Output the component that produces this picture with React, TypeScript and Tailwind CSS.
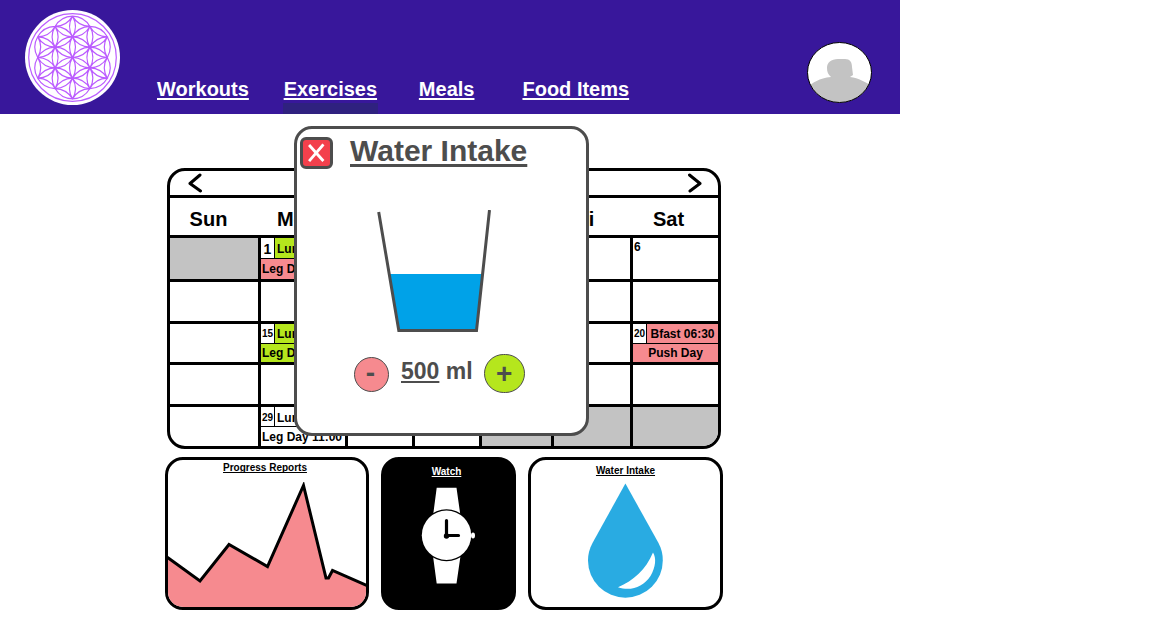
import React from "react";

const R = 20.7;

function latticePoint(a: number, b: number) {
  return { x: a * R * 0.84, y: (b + a / 2) * R };
}

function isInside(a: number, b: number) {
  return Math.max(Math.abs(a), Math.abs(b), Math.abs(a + b)) <= 2;
}

function petals() {
  const paths: string[] = [];
  const steps = [
    [1, 0],
    [0, 1],
    [1, -1],
  ];
  for (let a = -2; a <= 2; a++) {
    for (let b = -2; b <= 2; b++) {
      for (const [da, db] of steps) {
        if (!isInside(a, b) || !isInside(a + da, b + db)) continue;
        const p = latticePoint(a, b);
        const q = latticePoint(a + da, b + db);
        const from = `${p.x.toFixed(2)} ${p.y.toFixed(2)}`;
        const to = `${q.x.toFixed(2)} ${q.y.toFixed(2)}`;
        paths.push(`M${from}A${R} ${R} 0 0 0 ${to}A${R} ${R} 0 0 0 ${from}`);
      }
    }
  }
  return paths.join("");
}

function Logo() {
  return (
    <svg viewBox="-47.5 -47.5 95 95" className="h-[95px] w-[95px]" role="img" aria-label="Home">
      <circle r="47.5" fill="#fff" />
      <g fill="none" stroke="#bb5cff">
        <circle r="43.8" strokeWidth="1.2" />
        <path d={petals()} strokeWidth="1.2" />
      </g>
    </svg>
  );
}

function Avatar() {
  return (
    <svg viewBox="0 0 65 61" className="h-[61px] w-[65px]" aria-hidden="true">
      <defs>
        <clipPath id="avatar-clip">
          <ellipse cx="32.5" cy="30.5" rx="32" ry="30" />
        </clipPath>
      </defs>
      <ellipse cx="32.5" cy="30.5" rx="32" ry="30" fill="#fff" />
      <g clipPath="url(#avatar-clip)" fill="#c3c3c3">
        <path d="M20 26C20 20 24 17.5 31 17H38C43 17 45 20 45 25L46 33L43 35C52 36 58 40 65 44V61H0V45C6 41 12 36 24 35C21 32 20 30 20 26Z" />
      </g>
      <ellipse cx="32.5" cy="30.5" rx="32" ry="30" fill="none" stroke="#000" />
    </svg>
  );
}

const links = [
  { label: "Workouts", gap: "mr-[34px]" },
  { label: "Exercises", gap: "mr-[41px]", active: true },
  { label: "Meals", gap: "mr-12" },
  { label: "Food Items", gap: "" },
];

function Header() {
  return (
    <header className="flex h-[114px] justify-between bg-[#38179b] pr-7 pl-[25px]">
      <div className="flex">
        <a href="#home" className="mt-2.5 mr-[37px]">
          <Logo />
        </a>
        <nav className="flex items-end">
          {links.map((l) => (
            <a
              key={l.label}
              href="#"
              className={`flex flex-col items-center gap-0.5 text-xl leading-6 font-bold text-white underline decoration-2 underline-offset-2 ${l.gap}`}
            >
              {l.label}
              <span className={l.active ? "h-[11px] w-[95px] bg-[#2f217f]" : "h-[11px]"} />
            </a>
          ))}
        </nav>
      </div>
      <button type="button" aria-label="Profile" className="mt-[42px] self-start">
        <Avatar />
      </button>
    </header>
  );
}

function Arrow({ d }: { d: string }) {
  return (
    <svg viewBox="0 0 16 20" className="h-5 w-4" fill="none" stroke="#000" strokeWidth="3" strokeLinecap="round" strokeLinejoin="round">
      <path d={d} />
    </svg>
  );
}

type Cell = {
  date?: string;
  dateSize?: string;
  meal?: string;
  mealColor?: string;
  workout?: string;
  workoutColor?: string;
  center?: boolean;
  off?: boolean;
};

const off: Cell = { off: true };
const none: Cell = {};

const weeks: { height: string; inner: string; cells: Cell[] }[] = [
  {
    height: "h-[44px]",
    inner: "h-[41px]",
    cells: [
      off,
      { date: "1", dateSize: "text-[14px]", meal: "Lunch", mealColor: "bg-[#b5e61d]", workout: "Leg Day 11:00", workoutColor: "bg-[#f68a8f]" },
      none,
      none,
      none,
      none,
      { date: "6" },
    ],
  },
  { height: "h-[42px]", inner: "h-[39px]", cells: [none, none, none, none, none, none, none] },
  {
    height: "h-[41px]",
    inner: "h-[38px]",
    cells: [
      none,
      { date: "15", dateSize: "text-[10px]", meal: "Lunch", mealColor: "bg-[#b5e61d]", workout: "Leg Day 11:00", workoutColor: "bg-[#b5e61d]" },
      none,
      none,
      none,
      none,
      { date: "20", dateSize: "text-[10px]", meal: "Bfast 06:30", mealColor: "bg-[#f68a8f]", workout: "Push Day", workoutColor: "bg-[#f68a8f]", center: true },
    ],
  },
  { height: "h-[42px]", inner: "h-[39px]", cells: [none, none, none, none, none, none, none] },
  {
    height: "h-[39px]",
    inner: "h-[39px]",
    cells: [
      none,
      { date: "29", dateSize: "text-[10px]", meal: "Lunch", mealColor: "bg-white", workout: "Leg Day 11:00", workoutColor: "bg-white" },
      none,
      none,
      off,
      off,
      off,
    ],
  },
];

function CellBody({ cell, inner }: { cell: Cell; inner: string }) {
  if (!cell.meal) {
    return <div className={`pt-px pl-px text-xs leading-4 font-bold ${inner}`}>{cell.date}</div>;
  }
  const align = cell.center ? "justify-center" : "pl-0.5";
  return (
    <div className={`flex flex-col text-xs leading-3 font-bold whitespace-nowrap ${inner}`}>
      <div className="flex flex-1 border-b border-black">
        <span className={`flex w-3.5 items-center justify-center border-r border-black pt-0.5 ${cell.dateSize}`}>{cell.date}</span>
        <span className={`flex flex-1 items-center pt-0.5 ${align} ${cell.mealColor}`}>{cell.meal}</span>
      </div>
      <span className={`flex flex-1 items-center ${cell.center ? "justify-center" : "pl-px"} ${cell.workoutColor}`}>{cell.workout}</span>
    </div>
  );
}

const days = ["Sun", "Mon", "Tue", "Wed", "Thu", "Fri", "Sat"];

function Calendar() {
  return (
    <section aria-label="Calendar" className="mx-0.5 overflow-hidden rounded-[18px] border-3 border-black bg-white">
      <div className="flex h-[27px] items-center justify-between border-b-3 border-black pr-[15px] pl-[17px]">
        <button type="button" aria-label="Previous month">
          <Arrow d="M13 2 3 10.5 13.5 18" />
        </button>
        <button type="button" aria-label="Next month">
          <Arrow d="M2.5 2 13 10.5 3 18" />
        </button>
      </div>
      <table className="w-full table-fixed border-separate border-spacing-0">
        <colgroup>
          <col className="w-[91px]" />
          <col className="w-[87px]" />
          <col className="w-[67px]" />
          <col className="w-[67px]" />
          <col className="w-[72px]" />
          <col className="w-[79px]" />
          <col className="w-[85px]" />
        </colgroup>
        <thead>
          <tr className="h-10">
            {days.map((d) => (
              <th
                key={d}
                scope="col"
                className={`border-b-3 border-black pt-1 pb-0 pl-0 text-center text-xl leading-6 font-bold ${d === "Fri" ? "pr-6" : "pr-3.5"}`}
              >
                {d}
              </th>
            ))}
          </tr>
        </thead>
        <tbody>
          {weeks.map((w, i) => (
            <tr key={i} className={w.height}>
              {w.cells.map((c, j) => (
                <td
                  key={j}
                  className={`border-black p-0 align-top ${i < 4 ? "border-b-3" : ""} ${j < 6 ? "border-r-3" : ""} ${c.off ? "bg-[#c3c3c3]" : ""}`}
                >
                  <CellBody cell={c} inner={w.inner} />
                </td>
              ))}
            </tr>
          ))}
        </tbody>
      </table>
    </section>
  );
}

function ProgressCard() {
  return (
    <section className="flex flex-col overflow-hidden rounded-[18px] border-3 border-black bg-white pt-0.5">
      <h2 className="pr-1 text-center text-[10px] leading-3 font-bold">
        <a href="#" className="underline [text-decoration-skip-ink:none]">Progress Reports</a>
      </h2>
      <svg viewBox="168 482 198 125" preserveAspectRatio="none" className="mt-auto h-[125px] w-full">
        <path
          d="M165 556 169 558.5 200 581 229 544.5 267.5 566.5 303.5 485.5 326 578H328.5L332.5 570.5 369 586.5V612H165Z"
          fill="#f68a8f"
          stroke="#000"
          strokeWidth="3"
        />
      </svg>
    </section>
  );
}

function WatchCard() {
  return (
    <section className="flex flex-col items-center rounded-[18px] border-3 border-black bg-black pt-1.5">
      <h2 className="pr-1 text-[10px] leading-3 font-bold text-white">
        <a href="#" className="underline">Watch</a>
      </h2>
      <svg viewBox="421 486 55 99" className="mt-2 h-[99px] w-[55px]" aria-hidden="true">
        <path d="M436.7 487.7H456.5L460.5 516H433ZM433 556H460.5L456.5 583.5H436.7Z" fill="#fff" />
        <circle cx="446.5" cy="535.3" r="26" fill="#000" />
        <circle cx="446.5" cy="535.3" r="24.7" fill="#fff" />
        <ellipse cx="473" cy="535.5" rx="2" ry="3" fill="#fff" />
        <path d="M446.5 520.5V535.5H458.5" fill="none" stroke="#000" strokeWidth="3.2" strokeLinecap="round" />
        <circle cx="446.5" cy="536" r="2.7" fill="#000" />
      </svg>
    </section>
  );
}

function WaterCard() {
  return (
    <section className="flex flex-col items-center rounded-[18px] border-3 border-black bg-white pt-[5px]">
      <h2 className="text-[10px] leading-3 font-bold">
        <a href="#" className="underline">Water Intake</a>
      </h2>
      <svg viewBox="587 483 77 115" className="mt-1.5 h-[115px] w-[77px]" aria-hidden="true">
        <path d="M625.4 483.5 658.5 543C661.5 548.5 662.8 554 662.8 560.5A37.4 37.2 0 0 1 588 560.5C588 554 589.5 548.5 592.5 543Z" fill="#29abe2" />
        <path d="M653 552.5C656.5 558 655.8 567 650.5 576C643 587 631 591.5 618 587.3C633.5 580.5 646 569.5 653 552.5Z" fill="#fff" />
      </svg>
    </section>
  );
}

function WaterDialog() {
  return (
    <div
      role="dialog"
      aria-labelledby="water-title"
      className="absolute top-3 left-[294px] h-[310px] w-[295px] rounded-[18px] border-3 border-[#4d4d4d] bg-white text-[#4d4d4d]"
    >
      <div className="flex items-start pt-1 pl-[3px]">
        <button
          type="button"
          aria-label="Close"
          className="mt-1 mr-[17px] flex h-8 w-[33px] items-center justify-center rounded-md border-3 border-[#4d4d4d] bg-[#f3404c]"
        >
          <svg viewBox="0 0 18 20" className="h-5 w-[18px]" fill="none" stroke="#fff" strokeWidth="2.8" strokeLinecap="square">
            <path d="M2 3 14.5 17M14.5 2.5 2 17" />
          </svg>
        </button>
        <h1 id="water-title" className="text-[30px] leading-9 font-bold underline decoration-3 underline-offset-3">
          Water Intake
        </h1>
      </div>
      <svg viewBox="377 210 116 123" className="mt-[41px] ml-20 h-[123px] w-[116px]" aria-hidden="true">
        <path d="M389.5 274H482.5L477 330H398.5Z" fill="#00a2e8" />
        <path d="M378.7 212 398.8 330.5H476.5L489.5 210" fill="none" stroke="#4d4d4d" strokeWidth="3" />
      </svg>
      <div className="mt-[21px] ml-[57px] flex items-center gap-3">
        <button
          type="button"
          aria-label="Remove water"
          className="mt-px flex h-[35px] w-[35px] items-center justify-center rounded-full border border-[#4d4d4d] bg-[#f68a8f] pr-0.5 pb-0.5 text-[28px] leading-7 font-bold"
        >
          -
        </button>
        <p className="-mr-px mb-1.5 text-[23px] leading-6 font-bold">
          <span className="underline decoration-2 underline-offset-2">500</span> ml
        </p>
        <button
          type="button"
          aria-label="Add water"
          className="flex h-[39px] w-[41px] items-center justify-center rounded-full border border-[#4d4d4d] bg-[#b5e61d] text-[28px] leading-7 font-bold"
        >
          +
        </button>
      </div>
    </div>
  );
}

export default function App() {
  return (
    <div className="min-h-screen bg-white font-['Liberation_Sans',Arial,sans-serif] text-black">
      <div className="max-w-[900px]">
        <Header />
        <main className="relative pt-[54px] pr-[177px] pl-[165px]">
          <Calendar />
          <div className="mt-2 grid h-[153px] grid-cols-[204fr_135fr_195fr] gap-3">
            <ProgressCard />
            <WatchCard />
            <WaterCard />
          </div>
          <WaterDialog />
        </main>
      </div>
    </div>
  );
}
